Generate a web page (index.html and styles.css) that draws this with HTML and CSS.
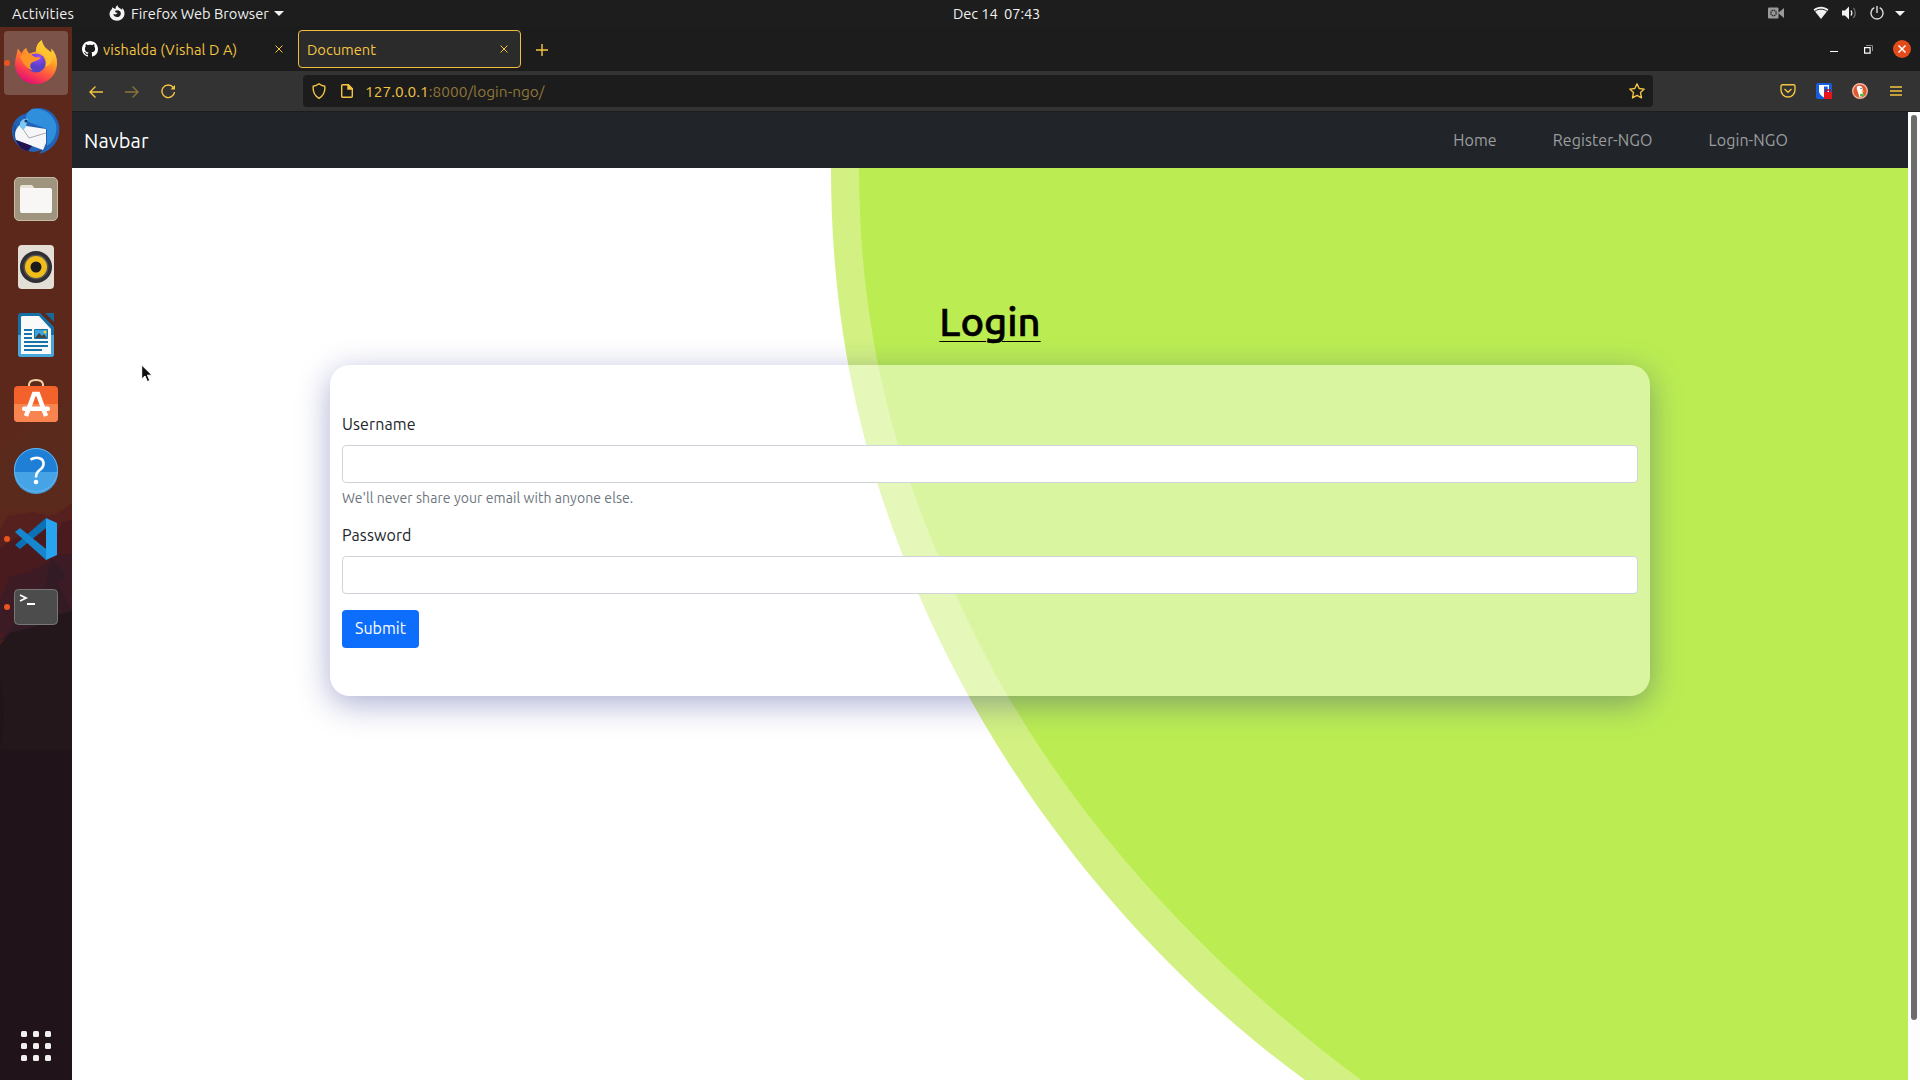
FILE: index.html
```html
<!DOCTYPE html>
<html lang="en">
<head>
<meta charset="utf-8">
<title>Document</title>
<link rel="stylesheet" href="styles.css">
</head>
<body>
<div class="desktop">
  <header class="topbar">
    <span class="activities">Activities</span>
    <svg class="app-glyph" width="16" height="16" viewBox="0 0 16 16"><path fill="#f2f2f2" d="M8.500 0C7 1.300 6.400 2.500 6.600 4L4.600 3.300 3.300 2.200 2.800 4.300C1.300 5.600.5 7.300.5 9 .7 13 4 15.700 8 15.700s7.500-3 7.500-7.200c0-2.300-.8-4.200-2.600-5.500l.2 1.700L10.500 3C9.200 2.200 8.600 1.300 8.500 0ZM9.300 5.200c1.900.7 2.700 2 2.500 3.700-.2 1.900-1.800 3.100-3.700 3.100S4.500 10.700 4.400 9l2.300.4 2-1.400-2.800-1 .8-1.500 2.600-.3Z"/></svg>
    <span class="app-name">Firefox Web Browser</span>
    <svg class="app-caret" width="10" height="5" viewBox="0 0 10 5"><path fill="#f2f2f2" d="M0 0h10L5 5z"/></svg>
    <time class="clock">Dec 14&nbsp; 07:43</time>
    <div class="status">
      <svg class="cam" width="16" height="12" viewBox="0 0 16 12"><rect width="10.500" height="11" y=".5" rx="1" fill="#9a9a9a"/><path fill="#9a9a9a" d="m10 6 6-5v10z"/><circle cx="5.500" cy="6" r="2.700" fill="none" stroke="#333" stroke-width="1.500" stroke-dasharray="1.500 .6"/></svg>
      <svg class="wifi" width="16" height="14" viewBox="0 0 16 14"><path fill="#f2f2f2" d="M.5 3.500C5-.3 11-.3 15.500 3.500L8 13z"/><path d="M2 5.200c3.500-2.700 8.500-2.700 12 0" fill="none" stroke="#1d1d1d"/></svg>
      <svg class="vol" width="15" height="14" viewBox="0 0 15 14"><path fill="#f2f2f2" d="M0 4.500h3L7 .5v13l-4-4H0z"/><path d="M9 4.500q1.700 2.500 0 5" fill="none" stroke="#f2f2f2" stroke-width="1.300"/><path d="M11.500 2q3.500 5 0 10" fill="none" stroke="#777" stroke-width="1.200"/></svg>
      <svg class="pow" width="14" height="14" viewBox="0 0 14 14" fill="none" stroke="#ddd" stroke-width="1.400"><path d="M4.300 1.700a6 6 0 1 0 5.400 0M7 0v7"/></svg>
      <svg width="10" height="5" viewBox="0 0 10 5"><path fill="#f2f2f2" d="M0 0h10L5 5z"/></svg>
    </div>
  </header>

  <div class="workspace">
    <aside class="dock">
      <svg class="wallpaper" width="72" height="1053" viewBox="0 27 72 1053" preserveAspectRatio="none">
        <path fill="#5c281c" d="M0 27h72v1053H0z"/><path fill="#5a2b1d" d="M0 450 72 400v110H0z"/>
        <path fill="#55201d" d="m0 530 8-14 26-4 14 4 10-3 14-10v70H0z"/>
        <path fill="#4a1b1e" d="m0 548 20-12 26-6 10 4 6-12 10-2v130H0z"/>
        <path fill="#3d1b24" d="m0 600 10-24 18-3 18-10 12-8 14-2v80H0z"/>
        <path fill="#321b24" d="m0 640 28-30 15-14 8-38 16 18-9 8 14 26v30z"/>
        <path fill="#23171c" d="m0 645 10-12 24-6 22-12 16-4v469H0z"/>
        <path fill="#201419" d="M0 680q8 35 0 70h72v330H0z" opacity=".7"/>
      </svg>
      <div class="dock-item active running">
        <svg class="lift" width="46" height="48" viewBox="0 0 48 48">
          <defs><linearGradient id="fx" x1=".8" y1="0" x2=".3" y2="1"><stop offset="0" stop-color="#fff04a"/><stop offset=".4" stop-color="#ff9d27"/><stop offset=".7" stop-color="#ff4b45"/><stop offset="1" stop-color="#e10a78"/></linearGradient><radialGradient id="fxg" cx=".6" cy=".2"><stop offset="0" stop-color="#9a4bff"/><stop offset="1" stop-color="#5741c8"/></radialGradient></defs>
          <path fill="url(#fx)" d="M30 1c-5 4-6 8-6 12l-7 2c-2-2-3-4-3-6-3 2-4 4-5 6L5 10C4 16 2 21 2 27c1 12 11 20 22 20s22-9 22-22c0-6-2-11-6-15v4C36 11 31 8 30 1Z"/>
          <circle cx="24" cy="25" r="10" fill="url(#fxg)"/>
          <path fill="#ff9426" d="M7 18c5-3 12-3 16 1h6c-1 3-6 4-8 5-5 2-3 7 0 9-7-2-11-8-14-15Z"/>
          <path fill="#ffc62e" opacity=".8" d="M30 1c-5 4-6 8-6 12 8 1 13 8 10 16 7-3 9-9 6-15C36 11 31 8 30 1Z"/>
        </svg>
      </div>
      <div class="dock-item">
        <svg width="48" height="48" viewBox="0 0 48 48">
          <path fill="#2263b8" d="M20 2c12-4 24 3 27 16 2 12-4 25-20 29l3-4-8 2C10 44 0 36 0 24 0 14 7 8 13 7Z"/>
          <path fill="#2f8fdc" d="M20 2c11-2 21 5 24 15 2 10-3 18-9 22V22L14 14c-1-5 1-9 6-12Z"/>
          <path fill="#174f9e" d="M3 16C-1 27 4 39 13 44l3-8L5 30z"/>
          <path fill="#f6f6f8" d="m8 18 26 4v14l-3 7-27-10C2 27 3 22 8 18Z"/>
          <path d="m9 19 8 12 17-5" fill="none" stroke="#aaa"/>
          <path fill="#7cc8f5" d="M8 20c-1-6 3-9 8-8-2 5-1 8-5 11Z"/><circle cx="14" cy="14" r="1.500" fill="#17335c"/>
          <path fill="#231450" d="m4 33 16 6-4 5C10 43 6 39 4 33Z"/>
        </svg>
      </div>
      <div class="dock-item">
        <svg width="48" height="48" viewBox="0 0 48 48"><rect x="2.500" y="2.500" width="43" height="43" rx="4.500" fill="#9f957f" stroke="#c4bca9"/><path fill="#e8e4da" d="M8 12q0-2 2-2h10l3 4v8H8z"/><rect x="8" y="13" width="32" height="25" rx="2" fill="#f8f7f5"/></svg>
      </div>
      <div class="dock-item">
        <svg width="48" height="48" viewBox="0 0 48 48"><rect x="6" y="2" width="36" height="44" rx="4" fill="#e3dfd6"/><circle cx="24" cy="24" r="16" fill="#302f36"/><circle cx="24" cy="24" r="12.500" fill="#555"/><circle cx="24" cy="24" r="11" fill="#f0bd1b"/><circle cx="24" cy="24" r="5.500" fill="#1c1c1c"/></svg>
      </div>
      <div class="dock-item">
        <svg width="48" height="48" viewBox="0 0 48 48"><path fill="#1470a5" d="M9 2h19l14 14v27q0 3-3 3H9q-3 0-3-3V5q0-3 3-3Z"/><path fill="#48a8da" d="M6 24h36v19q0 3-3 3H9q-3 0-3-3z"/><path fill="#fafafa" d="M10 5h17l12 13v25H9V6z"/><path fill="#176a98" d="M33 2h9v9z"/><path stroke="#1873a8" stroke-width="2" d="M12 19h8M12 23h8M12 27h8M12 31h24M12 35h24M12 39h18"/><path fill="#3ba4dc" stroke="#1873a8" d="M22.500 18.500h13v9h-13z"/><path fill="#444" d="m23 27 4-5 3 3 2-2 3 4z"/><circle cx="33" cy="21" r="1.500" fill="#f5d12f"/></svg>
      </div>
      <div class="dock-item">
        <svg class="lift" width="48" height="50" viewBox="0 0 48 50"><path d="M17 12V8q0-5 7-5t7 5v4" fill="none" stroke="#f3d4a5" stroke-width="2"/><rect x="2" y="9" width="44" height="36" rx="4" fill="#f3622b"/><path fill="#f88450" d="M2 27h44v14q0 4-4 4H6q-4 0-4-4z"/><path d="m14 39 8-22h4l8 22" fill="none" stroke="#fff" stroke-width="4.500"/><rect x="10" y="29.500" width="28" height="4.500" rx="2" fill="#fff"/></svg>
      </div>
      <div class="dock-item">
        <svg class="lift" width="48" height="48" viewBox="0 0 48 48"><circle cx="24" cy="24" r="22" fill="#1f7fd6"/><path fill="#46a3e6" d="M2 26h44a22 22 0 0 1-44 0Z"/><circle cx="24" cy="24" r="21.500" fill="none" stroke="#63b4ee"/><path d="M18.500 13.500q5-2.500 9-1.300c5 1.500 5.200 7.300 1.500 10.800-3 2.500-5 3.500-5 8.500" fill="none" stroke="#fff" stroke-width="2.600"/><circle cx="24" cy="36" r="2.300" fill="#fff"/></svg>
      </div>
      <div class="dock-item running">
        <svg width="48" height="48" viewBox="0 0 48 48"><path fill="#0b70b5" d="m3 30 5 4L34 13V3z"/><path fill="#1687cf" d="m3 17 5-4 26 21v11z"/><path fill="#28a4ef" d="m34 3 11 5v32l-11 5z"/></svg>
      </div>
      <div class="dock-item running">
        <svg width="48" height="48" viewBox="0 0 48 48"><rect x="2.500" y="6.500" width="43" height="35" rx="4" fill="#4c4c4c" stroke="#777"/><path d="m8 12 6 3-6 3M15 21h8" fill="none" stroke="#fff" stroke-width="1.800"/></svg>
      </div>
      <div class="apps"><i></i><i></i><i></i><i></i><i></i><i></i><i></i><i></i><i></i></div>
    </aside>

    <section class="browser">
      <div class="tabs">
        <div class="tab tab-github">
          <svg width="16" height="16" viewBox="0 0 16 16"><path fill="#fff" d="M8 0C3.580 0 0 3.580 0 8c0 3.540 2.290 6.530 5.470 7.590.4.070.55-.17.55-.38 0-.19-.01-.82-.01-1.490-2.010.37-2.530-.49-2.690-.94-.09-.23-.48-.94-.82-1.130-.28-.15-.68-.52-.01-.53.63-.01 1.080.58 1.230.82.72 1.210 1.870.87 2.330.66.070-.52.280-.87.510-1.070-1.780-.2-3.640-.89-3.640-3.950 0-.87.310-1.590.82-2.150-.08-.2-.36-1.020.08-2.120 0 0 .67-.21 2.200.82.640-.18 1.320-.27 2-.27s1.360.09 2 .27c1.530-1.040 2.200-.82 2.200-.82.440 1.100.16 1.920.08 2.120.51.560.82 1.270.82 2.150 0 3.070-1.870 3.750-3.650 3.950.29.25.54.73.54 1.480 0 1.070-.01 1.930-.01 2.200 0 .21.15.46.55.38A8.010 8.010 0 0 0 16 8c0-4.420-3.580-8-8-8Z"/></svg>
          <span class="tab-label">vishalda (Vishal D A)</span>
          <svg class="x" width="8" height="8" viewBox="0 0 8 8"><path d="m.5.5 7 7m0-7-7 7"/></svg>
        </div>
        <div class="tab tab-doc">
          <span class="tab-label">Document</span>
          <svg class="x" width="8" height="8" viewBox="0 0 8 8"><path d="m.5.5 7 7m0-7-7 7"/></svg>
        </div>
        <svg class="plus" width="12" height="12" viewBox="0 0 12 12"><path d="M6 0v12M0 6h12"/></svg>
        <div class="window-buttons">
          <svg width="8" height="10" viewBox="0 0 8 10"><path fill="#fff" d="M0 7h8v1H0z"/></svg>
          <svg width="9" height="9" viewBox="0 0 9 9" fill="none"><path stroke="#888" d="M2 .5h6.500V6"/><path stroke="#fff" stroke-width="1.200" d="M.6 2.600h5.500v5.500H.6z"/></svg>
          <svg width="18" height="18" viewBox="0 0 18 18"><circle cx="9" cy="9" r="9" fill="#e34c1a"/><path d="m5.500 5.500 7 7m0-7-7 7" stroke="#fff" stroke-width="1.500"/></svg>
        </div>
      </div>

      <div class="toolbar">
        <div class="nav-buttons">
          <svg width="14" height="12" viewBox="0 0 14 12"><path d="M14 6H1M6.500.5 1 6l5.500 5.500"/></svg>
          <svg class="dim" width="14" height="12" viewBox="0 0 14 12"><path d="M0 6h13M7.500.5 13 6l-5.500 5.500"/></svg>
          <svg width="15" height="15" viewBox="0 0 15 15"><path d="M12.300 3.500A6.300 6.300 0 1 0 13.500 8"/><path d="M9.500 5.500h4.500V1z" fill="#f5c542" stroke="none"/></svg>
        </div>
        <div class="urlbar">
          <svg width="14" height="16" viewBox="0 0 14 16"><path d="M7 .8c2 1.500 3.700 2.100 5.800 2.500.5 5-1.300 9.500-5.800 12C2.500 12.800.7 8.300 1.200 3.300 3.300 2.900 5 2.300 7 .8Z"/></svg>
          <svg class="page-icon" width="12" height="14" viewBox="0 0 12 14"><path d="M1.700.7h5.600l4 4v7.600q0 1-1 1H1.700q-1 0-1-1V1.700q0-1 1-1Z"/><path d="M7 .7v4.300h4.300z" fill="#f5c542"/></svg>
          <span class="url"><b>127.0.0.1</b>:8000/login-ngo/</span>
          <svg class="star" width="16" height="16" viewBox="0 0 16 16"><path stroke-linejoin="round" d="m8 .8 2.200 4.700 5 .6-3.700 3.500 1 5.300L8 12.300l-4.500 2.600 1-5.300L.8 6.100l5-.6z"/></svg>
        </div>
        <div class="extensions">
          <svg width="16" height="14" viewBox="0 0 16 14"><path d="M2.500.8h11q1.500 0 1.500 1.500V6A7 7 0 0 1 1 6V2.300Q1 .8 2.500.8ZM4.500 5 8 8.300 11.500 5" stroke-width="1.400"/></svg>
          <svg width="16" height="16" viewBox="0 0 16 16"><rect width="16" height="16" rx="2" fill="#175ddc" stroke="none"/><path fill="#fff" stroke="none" d="M3 2h10v6q0 3.500-5 6.500-5-3-5-6.500z"/><path fill="#175ddc" stroke="none" d="M8 3.500h3.700V8q0 2.500-3.700 4.500z"/><rect x="8" y="9" width="8" height="7" fill="#e8141c" stroke="none"/><path d="M10 9V7h4v2" stroke="#b5101a" stroke-width="1.500"/></svg>
          <svg width="16" height="16" viewBox="0 0 16 16"><circle cx="8" cy="8" r="7.300" fill="#de5833" stroke="#f5b5a0"/><path fill="#fff" stroke="none" d="M5 3.500q4-2 5.500 1.500l.5 8-3.500 1.500Q6.500 10 4.800 6z"/><path fill="#f6b01c" stroke="none" d="M9.500 7.500 13 8l-3 1.500z"/><path fill="#58b947" stroke="none" d="m8 11 4-.5V13l-4 .5z"/><circle cx="9" cy="5.500" r=".7" fill="#2d4f8e" stroke="none"/></svg>
          <svg class="burger" width="12" height="10" viewBox="0 0 12 10"><path d="M0 1h12M0 5h12M0 9h12"/></svg>
        </div>
      </div>

      <div class="viewport">
        <div class="page">
          <nav class="navbar">
            <a class="brand">Navbar</a>
            <a class="link">Home</a>
            <a class="link">Register-NGO</a>
            <a class="link">Login-NGO</a>
          </nav>
          <main class="content">
            <svg class="blob" width="1836" height="912" viewBox="72 168 1836 912">
              <path fill="#d2f182" d="M831 168C831 316 857.500 452 918.500 594C1000 784 1138 958 1305 1080H1908V168Z"/>
              <path fill="#bbed53" d="M859 168C859 316 888.500 452 955.500 594C1043 791 1191 953 1361 1080H1908V168Z"/>
            </svg>
            <h1 class="title">Login</h1>
            <form class="card">
              <label class="label" for="user">Username</label>
              <input class="field" id="user" type="text">
              <p class="help">We'll never share your email with anyone else.</p>
              <label class="label" for="pass">Password</label>
              <input class="field" id="pass" type="password">
              <button class="submit" type="button">Submit</button>
            </form>
          </main>
        </div>
        <div class="scrollbar"><div class="thumb"></div></div>
      </div>
    </section>
  </div>
  <svg class="cursor" width="12" height="19" viewBox="0 0 12 19"><path fill="#111" stroke="#fff" d="M.7 1v14l3.300-3 2.300 5.500 2.500-1-2.300-5.300H11z"/></svg>
</div>
</body>
</html>
```
FILE: styles.css
```css
* { box-sizing: border-box; }
body {
  margin: 0;
  overflow: hidden;
  font-family: Ubuntu, "Noto Sans", sans-serif;
  font-size: 14.667px;
  color: #212529;
}
svg { display: block; flex: none; }
span, a, time { white-space: nowrap; }
.desktop { position: relative; width: 1920px; height: 1080px; display: flex; flex-direction: column; background: #fff; }

.topbar { height: 27px; flex: none; background: #1d1d1d; color: #f0f0f0; display: flex; align-items: center; padding: 0 15px 1px 12px; }
.activities { width: 97px; letter-spacing: .2px; }
.app-name { margin-left: 6px; width: 143px; }
.clock { margin-left: 669px; letter-spacing: -.1px; }
.status { margin-left: auto; display: flex; align-items: center; }
.cam { margin-right: 29px; }
.wifi, .vol { margin-right: 13px; }
.pow { margin-right: 11px; }

.workspace { flex: 1; display: flex; min-height: 0; }
.dock { width: 72px; position: relative; display: flex; flex-direction: column; align-items: center; gap: 4px; padding-top: 4px; border-right: 1px solid #1a1114; background: #21151b; }
.wallpaper { position: absolute; left: 0; top: 0; }
.dock-item { position: relative; width: 64px; height: 64px; border-radius: 4px; display: flex; align-items: center; justify-content: center; }
.dock-item.active { background: rgba(255, 255, 255, .2); }
.dock-item.running::before { content: ""; position: absolute; left: 0; top: 29px; width: 6px; height: 6px; border-radius: 50%; background: #e95420; }
.lift { margin-bottom: 2px; }
.apps { position: relative; margin: auto 0 19px; display: grid; grid-template-columns: repeat(3, 6px); gap: 6px; }
.apps i { height: 6px; border-radius: 1.5px; background: #f0f0ee; }

.browser { flex: 1; display: flex; flex-direction: column; min-width: 0; }
.browser .tabs { height: 44px; background: #1c1c1c; display: flex; align-items: center; padding-right: 9px; color: #f5c542; }
.tab { display: flex; align-items: center; height: 38px; }
.tab-github { width: 226px; padding: 0 15px 0 10px; }
.tab-github .tab-label { margin-left: 5px; letter-spacing: .12px; }
.tab-label { padding-top: 1px; }
.tab-doc { width: 223px; padding: 0 12px 0 8px; border: 1px solid #f0bd3f; border-radius: 4px; background: #2b2b2b; }
.x { margin-left: auto; stroke: #f5c542; }
.plus { margin-left: 15px; margin-top: 1px; stroke: #f5c542; stroke-width: 1.4; }
.window-buttons { margin-left: auto; display: flex; align-items: center; }
.window-buttons svg + svg { margin-left: 26px; }
.window-buttons svg:last-child { margin-left: 20px; }

.toolbar { height: 41px; background: #333; border-bottom: 1px solid #1c1c1c; display: flex; align-items: center; padding-right: 18px; }
.toolbar svg { fill: none; stroke: #f5c542; stroke-width: 1.4; }
.nav-buttons { width: 231px; display: flex; align-items: center; gap: 22px; padding: 1px 0 0 17px; }
.nav-buttons .dim { opacity: .45; }
.urlbar { width: 1350px; height: 32px; background: #1c1c1c; border-radius: 4px; display: flex; align-items: center; padding: 0 8px 0 9px; }
.page-icon { margin-left: 15px; }
.url { margin-left: 12px; color: #8f763a; font-size: 15.4px; letter-spacing: .03px; }
.url b { font-weight: 400; color: #f5c542; }
.star { margin-left: auto; }
.extensions { margin-left: auto; display: flex; align-items: center; gap: 20px; }
.extensions .burger { margin-left: 2px; }

.viewport { flex: 1; display: flex; min-height: 0; }
.page { width: 1836px; display: flex; flex-direction: column; font-size: 16px; }
.navbar { height: 56px; flex: none; background: #212529; display: flex; align-items: center; padding: 0 120px 0 12px; color: #9b9d9e; }
.brand { font-size: 20px; color: #fff; margin-right: auto; letter-spacing: .15px; }
.link { letter-spacing: .08px; }
.link + .link { margin-left: 56px; }
.content { flex: 1; position: relative; display: flex; flex-direction: column; align-items: center; }
.blob { position: absolute; left: 0; top: 0; }
.title { position: relative; margin: 130px 0 19px; font-size: 40px; line-height: 48px; font-weight: 500; color: #000; -webkit-text-stroke: .6px #000; text-decoration: underline; text-decoration-thickness: 1px; text-underline-offset: 5px; }
.card { position: relative; width: 1320px; padding: 48px 12px; border-radius: 20px; background: rgba(255, 255, 255, .45); box-shadow: 0 8px 32px 0 rgba(31, 38, 135, .37); display: flex; flex-direction: column; align-items: flex-start; }
.label { line-height: 22px; margin-bottom: 10px; letter-spacing: .1px; }
.field { width: 100%; height: 38px; padding: 6px 12px; border: 1px solid #ced4da; border-radius: 4px; background: #fff; }
.help { margin: 5px 0 15px; font-size: 14px; line-height: 21px; letter-spacing: .08px; color: #6c757d; }
.submit { margin-top: 16px; width: 77px; height: 38px; padding: 0 0 2px; border: 0; border-radius: 4px; background: #0d6efd; color: #fff; font: inherit; }
.scrollbar { width: 12px; background: #fdfdfd; padding: 3px; }
.thumb { width: 6px; height: 905px; border-radius: 3px; background: #6c6c6c; }
.cursor { position: absolute; left: 141px; top: 364px; }
```
